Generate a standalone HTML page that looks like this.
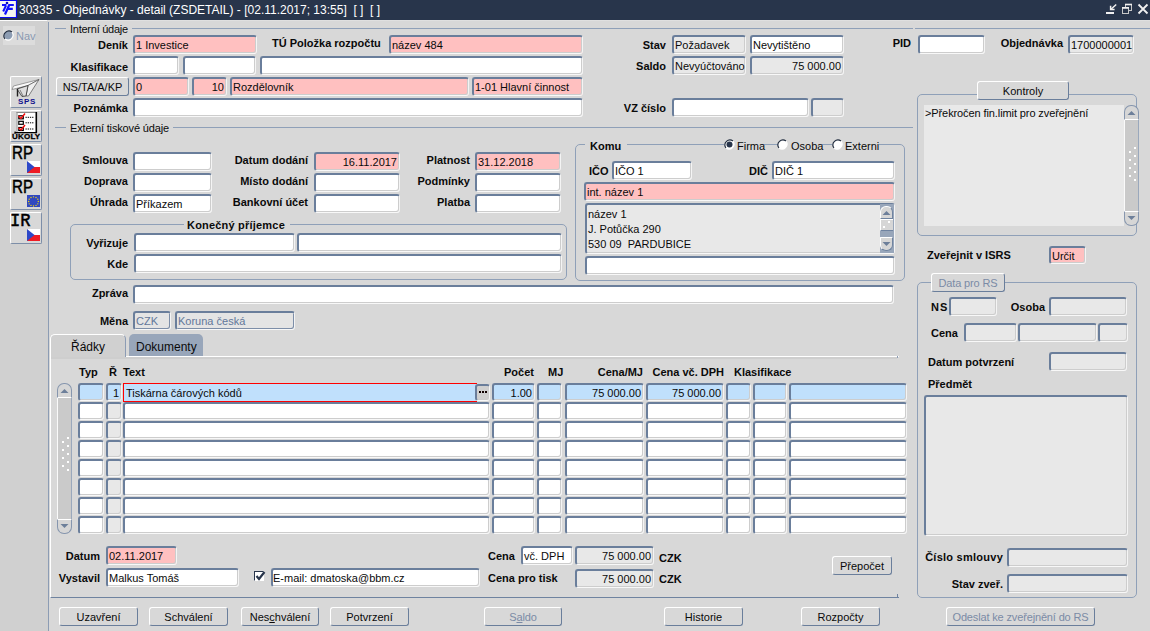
<!DOCTYPE html>
<html><head><meta charset="utf-8"><title>ZSDETAIL</title>
<style>
*{margin:0;padding:0}
html,body{width:1150px;height:631px;overflow:hidden;background:#d8d8d8;}
body{position:relative;font-family:"Liberation Sans",sans-serif;font-size:11px;color:#0a0a0a;}
.f{position:absolute;box-sizing:border-box;border-top:2px solid #6a7e9b;border-left:2px solid #6a7e9b;border-right:1px solid #f4f4f4;border-bottom:1px solid #f8f8f8;border-radius:3px;overflow:hidden;white-space:nowrap;line-height:14px;padding:1px 2px 0 1px;box-shadow:inset -1px -1px 0 #cdcdcd;}
.l{position:absolute;font-weight:bold;line-height:13px;white-space:nowrap;}
.b{position:absolute;box-sizing:border-box;background:#d8d8d8;border-top:1px solid #fff;border-left:1px solid #fff;border-right:1px solid #6a7e9b;border-bottom:1px solid #6a7e9b;border-radius:3px;text-align:center;white-space:nowrap;}
.b u{text-decoration:underline;}
</style></head>
<body>
<div style="position:absolute;left:0px;top:0px;width:1150px;height:20px;background:#28354b;"></div>
<div style="position:absolute;left:0px;top:20px;width:1150px;height:1px;background:#e0e0e0;"></div>
<div style="position:absolute;left:0px;top:20px;width:47px;height:1px;background:#fcfcfc;"></div>
<svg style="position:absolute;left:0;top:0" width="18" height="19" viewBox="0 0 18 19">
<rect x="0" y="0" width="16" height="17" fill="#f6f6f2"/>
<path d="M0 0.5 H16.5 V17.5 H0" stroke="#0808f0" stroke-width="1.2" fill="none"/>
<circle cx="7" cy="3" r="1.3" fill="#0808c0"/>
<path d="M2 5 H6.5 M6 5.5 L3.2 11.5" stroke="#1010ff" stroke-width="2" fill="none"/>
<path d="M9.3 4.8 L5 14.5 M8.5 5 H13.8 M7.3 8.8 H12.8" stroke="#1010ff" stroke-width="2.2" fill="none"/>
</svg>
<div style="position:absolute;left:19px;top:3px;font-size:12px;line-height:14px;color:#fff;white-space:nowrap;">30335 - Objednávky - detail (ZSDETAIL) - [02.11.2017; 13:55]&nbsp; [ ]&nbsp; [ ]</div>
<svg style="position:absolute;left:1100px;top:0" width="50" height="19" viewBox="0 0 50 19">
<g stroke="#f0f0f0" fill="none">
<path d="M16.2 4.5 L11 9.2" stroke-width="1.5"/>
<path d="M10.6 5.8 V9.6 H14.6" stroke-width="1.5"/>
<path d="M6 13 H14" stroke-width="2"/>
<rect x="25.5" y="4.5" width="6" height="6" stroke="#c8c8c8" stroke-width="1"/>
<path d="M25 4.5 H32" stroke-width="1.6"/>
<rect x="22.5" y="8" width="6" height="5.5" fill="#28354b" stroke="#c8c8c8" stroke-width="1"/>
<path d="M22 7.8 H29" stroke-width="1.6"/>
<path d="M38.5 4.5 L47.5 13.5 M47.5 4.5 L38.5 13.5" stroke-width="1.8"/>
</g></svg>
<div style="position:absolute;left:0px;top:21px;width:48px;height:610px;background:#d0d0d0;"></div>
<div style="position:absolute;left:48px;top:22px;width:1px;height:609px;background:#8c9cb4;"></div>
<div style="position:absolute;left:3px;top:26px;width:32px;height:19px;background:#dcdcdc;"></div>
<svg style="position:absolute;left:3px;top:30px" width="11" height="11"><circle cx="5.5" cy="5.5" r="4.3" fill="#8d9db3"/><path d="M2 9 A5 5 0 0 1 9 2" stroke="#1e2a3c" stroke-width="1.1" fill="none"/><path d="M9 2 A5 5 0 0 1 2 9" stroke="#fff" stroke-width="1.1" fill="none"/></svg>
<div class="l" style="top:30px;left:16px;font-weight:normal;color:#8a9ab2;">Nav</div>
<div style="position:absolute;left:10px;top:76px;width:32px;height:32px;box-sizing:border-box;border-top:1px solid #fff;border-left:1px solid #fff;border-right:1px solid #7d8ea8;border-bottom:1px solid #7d8ea8;border-radius:2px;background:#d8d8d8;overflow:hidden"><div style="position:absolute;left:-1px;top:-1px;width:32px;height:32px"><svg width="32" height="32" style="position:absolute;left:0;top:0">
<path d="M2 13.5 L3.5 10 L29 3.5 L18 9.5 Z" fill="#fafafa" stroke="#7a7a7a" stroke-width="0.7"/>
<path d="M18 9.5 L29 3.5 L18.5 20 L16 20 Z" fill="#f0f0f0" stroke="#505050" stroke-width="0.7"/>
<path d="M7 13 L18 9.5 L16 20 L12 20.5 Z" fill="#dedede" stroke="#303030" stroke-width="0.8"/>
<path d="M7.5 13 V20.5" stroke="#202020" stroke-width="1.4"/>
<path d="M10 14 L13 20" stroke="#606060" stroke-width="0.8"/>
</svg><div style="position:absolute;left:0;top:21px;width:32px;text-align:center;font:bold 8px/9px 'Liberation Sans',sans-serif;color:#10108c;letter-spacing:0.6px;padding-left:1px">SPS</div></div></div>
<div style="position:absolute;left:10px;top:110px;width:32px;height:32px;box-sizing:border-box;border-top:1px solid #fff;border-left:1px solid #fff;border-right:1px solid #7d8ea8;border-bottom:1px solid #7d8ea8;border-radius:2px;background:#d8d8d8;overflow:hidden"><div style="position:absolute;left:-1px;top:-1px;width:32px;height:32px"><svg width="32" height="32" style="position:absolute;left:0;top:0">
<rect x="6.5" y="2" width="20" height="20.5" fill="#fff"/>
<path d="M7 2 V22 M6.5 2.5 H26" stroke="#8a8a8a" stroke-width="1"/>
<path d="M26.3 2 V23" stroke="#000" stroke-width="1.6"/>
<path d="M5 22.6 H27 M5.1 21.5 V23" stroke="#000" stroke-width="1.2"/>
<rect x="8.8" y="5.8" width="4.5" height="3" fill="none" stroke="#000" stroke-width="1.2"/>
<rect x="8.8" y="11.3" width="4.5" height="3" fill="none" stroke="#000" stroke-width="1.2"/>
<rect x="8.8" y="17.5" width="4.5" height="3" fill="none" stroke="#000" stroke-width="1.2"/>
<path d="M15.5 7.3 H24 M15.5 12.8 H24 M15.5 19 H24" stroke="#000" stroke-width="1" stroke-dasharray="1.3 0.9"/>
<path d="M8.5 6 L11 8.5 L15 3.5 M8.5 17.7 L11 20 L15 15" stroke="#f01010" stroke-width="1.5" fill="none"/>
</svg><div style="position:absolute;left:2px;top:22px;width:28px;text-align:center;font:bold 8px/9px 'Liberation Sans',sans-serif;color:#000;letter-spacing:0.2px;-webkit-text-stroke:0.3px #000">ÚKOLY</div></div></div>
<div style="position:absolute;left:10px;top:144px;width:32px;height:32px;box-sizing:border-box;border-top:1px solid #fff;border-left:1px solid #fff;border-right:1px solid #7d8ea8;border-bottom:1px solid #7d8ea8;border-radius:2px;background:#d8d8d8;overflow:hidden"><div style="position:absolute;left:-1px;top:-1px;width:32px;height:32px"><div style="position:absolute;left:2px;top:0px;font:18px/18px 'Liberation Sans',sans-serif;color:#000;transform:scaleX(0.84);transform-origin:0 0;-webkit-text-stroke:0.5px #000;white-space:nowrap">RP</div><svg width="13" height="12" style="position:absolute;left:17px;top:17px"><rect width="13" height="6" fill="#fff"/><rect y="6" width="13" height="6" fill="#ee1c25"/><path d="M0 0 L7.5 6 L0 12 Z" fill="#2d48c8"/></svg></div></div>
<div style="position:absolute;left:10px;top:178px;width:32px;height:32px;box-sizing:border-box;border-top:1px solid #fff;border-left:1px solid #fff;border-right:1px solid #7d8ea8;border-bottom:1px solid #7d8ea8;border-radius:2px;background:#d8d8d8;overflow:hidden"><div style="position:absolute;left:-1px;top:-1px;width:32px;height:32px"><div style="position:absolute;left:2px;top:0px;font:18px/18px 'Liberation Sans',sans-serif;color:#000;transform:scaleX(0.84);transform-origin:0 0;-webkit-text-stroke:0.5px #000;white-space:nowrap">RP</div><svg width="13" height="12" style="position:absolute;left:17px;top:17px"><rect width="13" height="12" fill="#3048c0"/><g fill="#ffe000"><circle cx="6.5" cy="1.8" r=".65"/><circle cx="9" cy="2.5" r=".65"/><circle cx="10.8" cy="4.2" r=".65"/><circle cx="11.3" cy="6.5" r=".65"/><circle cx="10.8" cy="8.8" r=".65"/><circle cx="9" cy="10.4" r=".65"/><circle cx="6.5" cy="11" r=".65"/><circle cx="4" cy="10.4" r=".65"/><circle cx="2.2" cy="8.8" r=".65"/><circle cx="1.7" cy="6.5" r=".65"/><circle cx="2.2" cy="4.2" r=".65"/><circle cx="4" cy="2.5" r=".65"/></g></svg></div></div>
<div style="position:absolute;left:10px;top:212px;width:32px;height:32px;box-sizing:border-box;border-top:1px solid #fff;border-left:1px solid #fff;border-right:1px solid #7d8ea8;border-bottom:1px solid #7d8ea8;border-radius:2px;background:#d8d8d8;overflow:hidden"><div style="position:absolute;left:-1px;top:-1px;width:32px;height:32px"><div style="position:absolute;left:0px;top:0px;font:18px/18px 'Liberation Mono',monospace;color:#000;transform:scaleX(0.95);transform-origin:0 0;-webkit-text-stroke:0.5px #000;white-space:nowrap">IR</div><svg width="13" height="12" style="position:absolute;left:17px;top:17px"><rect width="13" height="6" fill="#fff"/><rect y="6" width="13" height="6" fill="#ee1c25"/><path d="M0 0 L7.5 6 L0 12 Z" fill="#2d48c8"/></svg></div></div>
<div style="position:absolute;left:55px;top:28px;width:11px;height:1px;background:#8fa0b8;"></div>
<div class="l" style="top:23px;left:70px;font-weight:normal;letter-spacing:-0.25px;">Interní údaje</div>
<div style="position:absolute;left:132px;top:28px;width:781px;height:1px;background:#8fa0b8;"></div>
<div style="position:absolute;left:915px;top:28px;width:235px;height:1px;background:#8fa0b8;"></div>
<div class="l" style="top:39px;right:1022px;">Deník</div>
<div class="f" style="left:133px;top:35px;width:124px;height:19px;background:#ffc0c0;"><span style="">1 Investice</span></div>
<div class="l" style="top:37px;left:272px;">TÚ Položka rozpočtu</div>
<div class="f" style="left:389px;top:35px;width:194px;height:19px;background:#ffc0c0;"><span style="">název 484</span></div>
<div class="l" style="top:39px;right:484px;">Stav</div>
<div class="f" style="left:672px;top:35px;width:74px;height:19px;background:#e8e8e8;"><span style="">Požadavek</span></div>
<div class="f" style="left:750px;top:35px;width:94px;height:19px;background:#fff;"><span style="">Nevytištěno</span></div>
<div class="l" style="top:37px;right:239px;">PID</div>
<div class="f" style="left:918px;top:35px;width:67px;height:19px;background:#fff;"><span style=""></span></div>
<div class="l" style="top:37px;right:87px;">Objednávka</div>
<div class="f" style="left:1068px;top:35px;width:66px;height:19px;background:#e8e8e8;"><span style="">1700000001</span></div>
<div class="l" style="top:61px;right:1022px;">Klasifikace</div>
<div class="f" style="left:133px;top:56px;width:46px;height:19px;background:#fff;"><span style=""></span></div>
<div class="f" style="left:183px;top:56px;width:73px;height:19px;background:#fff;"><span style=""></span></div>
<div class="f" style="left:260px;top:56px;width:323px;height:19px;background:#fff;"><span style=""></span></div>
<div class="l" style="top:60px;right:484px;">Saldo</div>
<div class="f" style="left:672px;top:56px;width:74px;height:19px;background:#e8e8e8;"><span style="">Nevyúčtováno</span></div>
<div class="f" style="left:750px;top:56px;width:94px;height:19px;background:#e8e8e8;text-align:right;"><span style="">75 000.00</span></div>
<div class="b" style="left:56px;top:77px;width:73px;height:19px;line-height:18px;">NS/TA/A/KP</div>
<div class="f" style="left:133px;top:77px;width:56px;height:19px;background:#ffc0c0;"><span style="">0</span></div>
<div class="f" style="left:192px;top:77px;width:35px;height:19px;background:#ffc0c0;text-align:right;"><span style="">10</span></div>
<div class="f" style="left:230px;top:77px;width:239px;height:19px;background:#ffc0c0;"><span style="">Rozdělovník</span></div>
<div class="f" style="left:472px;top:77px;width:111px;height:19px;background:#ffc0c0;"><span style="">1-01 Hlavní činnost</span></div>
<div class="l" style="top:102px;right:1022px;">Poznámka</div>
<div class="f" style="left:133px;top:98px;width:450px;height:19px;background:#fff;"><span style=""></span></div>
<div class="l" style="top:102px;right:484px;">VZ číslo</div>
<div class="f" style="left:672px;top:98px;width:137px;height:19px;background:#fff;"><span style=""></span></div>
<div class="f" style="left:811px;top:98px;width:33px;height:19px;background:#e8e8e8;"><span style=""></span></div>
<div style="position:absolute;left:917px;top:94px;width:220px;height:142px;box-sizing:border-box;border:1px solid #8fa0b8;border-radius:5px;"></div>
<div class="b" style="left:977px;top:81px;width:92px;height:19px;line-height:18px;">Kontroly</div>
<div style="position:absolute;left:924px;top:105px;width:200px;height:121px;background:#e9e9e9;"></div>
<div class="l" style="top:107px;left:925px;font-weight:normal;letter-spacing:-0.1px;">&gt;Překročen fin.limit pro zveřejnění</div>
<div style="position:absolute;left:1124px;top:117px;width:15px;height:97px;background:#cacaca;box-sizing:border-box;border-left:1px solid #fafafa;border-right:1px solid #9aa8bc;"></div>
<div style="position:absolute;left:1124px;top:105px;width:15px;height:15px;box-sizing:border-box;border:1px solid #8696ae;border-radius:7px 7px 1px 1px;background:#d6d6d6;border-bottom-color:#fff"></div>
<svg style="position:absolute;left:1124px;top:105px" width="15" height="15"><path d="M3.5 10 L7.5 6 L11.5 10 Z" fill="#6d7f9a"/></svg>
<div style="position:absolute;left:1124px;top:211px;width:15px;height:15px;box-sizing:border-box;border:1px solid #8696ae;border-radius:1px 1px 7px 7px;background:#d6d6d6;border-top-color:#fff"></div>
<svg style="position:absolute;left:1124px;top:211px" width="15" height="15"><path d="M3.5 5 L7.5 9 L11.5 5 Z" fill="#6d7f9a"/></svg>
<svg style="position:absolute;left:1124px;top:105px" width="15" height="121"><rect x="10" y="42" width="2" height="2" fill="#fff"/><rect x="10" y="50" width="2" height="2" fill="#fff"/><rect x="10" y="58" width="2" height="2" fill="#fff"/><rect x="10" y="66" width="2" height="2" fill="#fff"/><rect x="10" y="74" width="2" height="2" fill="#fff"/><rect x="5" y="46" width="2" height="2" fill="#fff"/><rect x="5" y="54" width="2" height="2" fill="#fff"/><rect x="5" y="62" width="2" height="2" fill="#fff"/><rect x="5" y="70" width="2" height="2" fill="#fff"/></svg>
<div class="l" style="top:249px;left:927px;">Zveřejnit v ISRS</div>
<div class="f" style="left:1049px;top:246px;width:37px;height:18px;background:#ffc0c0;"><span style="">Určit</span></div>
<div style="position:absolute;left:917px;top:282px;width:220px;height:316px;box-sizing:border-box;border:1px solid #8fa0b8;border-radius:5px;"></div>
<div class="b" style="left:931px;top:273px;width:74px;height:19px;line-height:18px;color:#7b8ba6;letter-spacing:-0.15px;">Data pro RS</div>
<div class="l" style="top:301px;left:931px;letter-spacing:1px;">NS</div>
<div class="f" style="left:949px;top:297px;width:48px;height:19px;background:#e8e8e8;"><span style=""></span></div>
<div class="l" style="top:301px;right:105px;">Osoba</div>
<div class="f" style="left:1049px;top:297px;width:78px;height:19px;background:#e8e8e8;"><span style=""></span></div>
<div class="l" style="top:327px;left:931px;">Cena</div>
<div class="f" style="left:964px;top:323px;width:53px;height:19px;background:#e8e8e8;"><span style=""></span></div>
<div class="f" style="left:1018px;top:323px;width:79px;height:19px;background:#e8e8e8;"><span style=""></span></div>
<div class="f" style="left:1098px;top:323px;width:30px;height:19px;background:#e8e8e8;"><span style=""></span></div>
<div class="l" style="top:356px;left:928px;">Datum potvrzení</div>
<div class="f" style="left:1049px;top:352px;width:78px;height:19px;background:#e8e8e8;"><span style=""></span></div>
<div class="l" style="top:378px;left:928px;">Předmět</div>
<div class="f" style="left:924px;top:395px;width:204px;height:141px;background:#e8e8e8;"><span style=""></span></div>
<div class="l" style="top:551px;right:147px;letter-spacing:0.25px;">Číslo smlouvy</div>
<div class="f" style="left:1007px;top:548px;width:121px;height:19px;background:#e8e8e8;"><span style=""></span></div>
<div class="l" style="top:578px;right:147px;">Stav zveř.</div>
<div class="f" style="left:1007px;top:574px;width:121px;height:19px;background:#e8e8e8;"><span style=""></span></div>
<div class="b" style="left:946px;top:607px;width:149px;height:19px;line-height:18px;color:#7b8ba6;letter-spacing:-0.15px;">Odeslat ke zveřejnění do RS</div>
<div style="position:absolute;left:55px;top:127px;width:11px;height:1px;background:#8fa0b8;"></div>
<div class="l" style="top:122px;left:70px;font-weight:normal;letter-spacing:-0.15px;">Externí tiskové údaje</div>
<div style="position:absolute;left:173px;top:127px;width:740px;height:1px;background:#8fa0b8;"></div>
<div class="l" style="top:154px;right:1022px;">Smlouva</div>
<div class="f" style="left:133px;top:152px;width:79px;height:19px;background:#fff;"><span style=""></span></div>
<div class="l" style="top:175px;right:1022px;">Doprava</div>
<div class="f" style="left:133px;top:173px;width:79px;height:19px;background:#fff;"><span style=""></span></div>
<div class="l" style="top:196px;right:1022px;">Úhrada</div>
<div class="f" style="left:133px;top:194px;width:79px;height:19px;background:#fff;"><span style="">Příkazem</span></div>
<div class="l" style="top:154px;right:842px;">Datum dodání</div>
<div class="f" style="left:314px;top:152px;width:86px;height:19px;background:#ffc0c0;text-align:right;"><span style="">16.11.2017</span></div>
<div class="l" style="top:175px;right:842px;">Místo dodání</div>
<div class="f" style="left:314px;top:173px;width:86px;height:19px;background:#fff;"><span style=""></span></div>
<div class="l" style="top:196px;right:842px;">Bankovní účet</div>
<div class="f" style="left:314px;top:194px;width:86px;height:19px;background:#fff;"><span style=""></span></div>
<div class="l" style="top:154px;right:680px;">Platnost</div>
<div class="f" style="left:475px;top:152px;width:86px;height:19px;background:#ffc0c0;"><span style="">31.12.2018</span></div>
<div class="l" style="top:175px;right:680px;">Podmínky</div>
<div class="f" style="left:475px;top:173px;width:86px;height:19px;background:#fff;"><span style=""></span></div>
<div class="l" style="top:196px;right:680px;">Platba</div>
<div class="f" style="left:475px;top:194px;width:86px;height:19px;background:#fff;"><span style=""></span></div>
<div style="position:absolute;left:70px;top:224px;width:497px;height:56px;box-sizing:border-box;border:1px solid #8fa0b8;border-radius:5px;"></div>
<div style="position:absolute;left:184px;top:220px;width:106px;height:8px;background:#d8d8d8;"></div>
<div class="l" style="top:219px;left:187px;letter-spacing:0.2px;">Konečný příjemce</div>
<div class="l" style="top:237px;right:1022px;">Vyřizuje</div>
<div class="f" style="left:134px;top:233px;width:161px;height:19px;background:#fff;"><span style=""></span></div>
<div class="f" style="left:297px;top:233px;width:265px;height:19px;background:#fff;"><span style=""></span></div>
<div class="l" style="top:258px;right:1022px;">Kde</div>
<div class="f" style="left:134px;top:254px;width:428px;height:19px;background:#fff;"><span style=""></span></div>
<div style="position:absolute;left:575px;top:144px;width:330px;height:137px;box-sizing:border-box;border:1px solid #8fa0b8;border-radius:5px;"></div>
<div style="position:absolute;left:585px;top:138px;width:42px;height:10px;background:#d8d8d8;"></div>
<div class="l" style="top:140px;left:590px;">Komu</div>
<div style="position:absolute;left:724px;top:138px;width:158px;height:10px;background:#d8d8d8;"></div>
<div style="position:absolute;left:762px;top:144px;width:16px;height:1px;background:#8fa0b8;"></div>
<div style="position:absolute;left:822px;top:144px;width:10px;height:1px;background:#8fa0b8;"></div>
<svg style="position:absolute;left:724px;top:139px" width="11" height="11"><circle cx="5.5" cy="5.5" r="4.5" fill="#fff"/><circle cx="5.5" cy="5.5" r="3" fill="#28354b"/><path d="M2 9 A5 5 0 0 1 9 2" stroke="#1e2a3c" stroke-width="1.1" fill="none"/><path d="M9 2 A5 5 0 0 1 2 9" stroke="#fff" stroke-width="1.1" fill="none"/></svg>
<div class="l" style="top:140px;left:737px;font-weight:normal;">Firma</div>
<svg style="position:absolute;left:777px;top:139px" width="11" height="11"><circle cx="5.5" cy="5.5" r="4.5" fill="#fff"/><path d="M2 9 A5 5 0 0 1 9 2" stroke="#1e2a3c" stroke-width="1.1" fill="none"/><path d="M9 2 A5 5 0 0 1 2 9" stroke="#fff" stroke-width="1.1" fill="none"/></svg>
<div class="l" style="top:140px;left:791px;font-weight:normal;">Osoba</div>
<svg style="position:absolute;left:832px;top:139px" width="11" height="11"><circle cx="5.5" cy="5.5" r="4.5" fill="#fff"/><path d="M2 9 A5 5 0 0 1 9 2" stroke="#1e2a3c" stroke-width="1.1" fill="none"/><path d="M9 2 A5 5 0 0 1 2 9" stroke="#fff" stroke-width="1.1" fill="none"/></svg>
<div class="l" style="top:140px;left:845px;font-weight:normal;">Externi</div>
<div style="position:absolute;left:879px;top:144px;width:21px;height:1px;background:#8fa0b8;"></div>
<div class="l" style="top:165px;left:589px;">IČO</div>
<div class="f" style="left:612px;top:161px;width:80px;height:19px;background:#fff;"><span style="">IČO 1</span></div>
<div class="l" style="top:165px;right:382px;">DIČ</div>
<div class="f" style="left:772px;top:161px;width:123px;height:19px;background:#fff;"><span style="">DIČ 1</span></div>
<div class="f" style="left:584px;top:182px;width:311px;height:19px;background:#ffc0c0;"><span style="">int. název 1</span></div>
<div class="f" style="left:585px;top:203px;width:310px;height:51px;background:#e8e8e8;line-height:15px;padding-top:2px">název 1<br>J. Potůčka 290<br>530 09&nbsp; PARDUBICE</div>
<div style="position:absolute;left:880px;top:204px;width:14px;height:49px;background:#98a6ba;"></div>
<div style="position:absolute;left:880px;top:206px;width:13px;height:13px;box-sizing:border-box;border-top:1px solid #fff;border-left:1px solid #fff;border-bottom:1px solid #6f83a0;border-right:1px solid #6f83a0;border-radius:6px 6px 1px 1px;background:#d6d6d6;"></div>
<svg style="position:absolute;left:880px;top:206px" width="14" height="13"><path d="M2.5 9 L6.5 5 L10.5 9 Z" fill="#6d7f9a"/></svg>
<div style="position:absolute;left:880px;top:219px;width:13px;height:12px;box-sizing:border-box;border-top:1px solid #fff;border-left:1px solid #fff;border-bottom:1px solid #6f83a0;background:#d6d6d6;"></div>
<svg style="position:absolute;left:880px;top:219px" width="14" height="12"><rect x="3" y="7" width="2" height="2" fill="#fff"/><rect x="8" y="2" width="2" height="2" fill="#fff"/></svg>
<div style="position:absolute;left:880px;top:237px;width:13px;height:14px;box-sizing:border-box;border-top:1px solid #fff;border-left:1px solid #fff;border-bottom:1px solid #6f83a0;border-right:1px solid #6f83a0;border-radius:1px 1px 6px 6px;background:#d6d6d6;"></div>
<svg style="position:absolute;left:880px;top:237px" width="14" height="14"><path d="M2.5 5 L6.5 9 L10.5 5 Z" fill="#6d7f9a"/></svg>
<div class="f" style="left:585px;top:256px;width:310px;height:19px;background:#fff;"><span style=""></span></div>
<div class="l" style="top:287px;right:1022px;">Zpráva</div>
<div class="f" style="left:133px;top:285px;width:761px;height:19px;background:#fff;"><span style=""></span></div>
<div class="l" style="top:315px;right:1022px;">Měna</div>
<div class="f" style="left:133px;top:311px;width:38px;height:19px;background:#e4e4e4;color:#62779a;box-shadow:inset -1px -1px 0 #7d8ea8;"><span style="">CZK</span></div>
<div class="f" style="left:175px;top:311px;width:120px;height:19px;background:#e4e4e4;color:#62779a;box-shadow:inset -1px -1px 0 #7d8ea8;"><span style="">Koruna česká</span></div>
<div style="position:absolute;left:50px;top:356px;width:849px;height:242px;box-sizing:border-box;border-left:1px solid #fff;border-top:1px solid #fff;border-bottom:1px solid #6f83a0;"></div>
<div style="position:absolute;left:50px;top:334px;width:76px;height:24px;box-sizing:border-box;background:#d0d0d0;border-top:1px solid #fff;border-left:1px solid #fff;border-right:1px solid #8c9cb4;border-radius:5px 5px 0 0;"></div>
<div class="l" style="top:341px;left:71px;font-weight:normal;font-size:12px;">Řádky</div>
<div style="position:absolute;left:129px;top:334px;width:74px;height:22px;background:#98a6ba;border-radius:5px 5px 0 0;"></div>
<div class="l" style="top:341px;left:136px;font-weight:normal;font-size:12px;">Dokumenty</div>
<div style="position:absolute;left:51px;top:357px;width:846px;height:2px;background:#cecece;"></div>
<div style="position:absolute;left:897px;top:356px;width:1px;height:2px;background:#8c9cb4;"></div>
<div style="position:absolute;left:897px;top:594px;width:1px;height:3px;background:#6f83a0;"></div>
<div class="l" style="top:366px;left:79px;">Typ</div>
<div class="l" style="top:366px;left:109px;">Ř</div>
<div class="l" style="top:366px;left:123px;">Text</div>
<div class="l" style="top:366px;right:616px;">Počet</div>
<div class="l" style="top:366px;left:548px;">MJ</div>
<div class="l" style="top:366px;right:507px;">Cena/MJ</div>
<div class="l" style="top:366px;right:426px;">Cena vč. DPH</div>
<div class="l" style="top:366px;left:734px;">Klasifikace</div>
<div class="f" style="left:78px;top:383px;width:26px;height:18px;background:#c0e0fc;"><span style=""></span></div>
<div class="f" style="left:106px;top:383px;width:16px;height:18px;background:#c0e0fc;text-align:right;"><span style="">1</span></div>
<div class="f" style="left:123px;top:383px;width:354px;height:19px;background:#c0e0fc;border:1px solid #ff0000;border-right:none;border-radius:0;padding-top:2px;padding-left:2px;box-shadow:none">Tiskárna čárových kódů</div>
<div class="f" style="left:475px;top:384px;width:15px;height:17px;background:#d0d0d0;padding:0"></div>
<svg style="position:absolute;left:475px;top:384px" width="15" height="17"><rect x="4" y="7" width="2" height="2" fill="#100000"/><rect x="7" y="7" width="2" height="2" fill="#100000"/><rect x="10" y="7" width="2" height="2" fill="#100000"/></svg>
<div class="f" style="left:492px;top:383px;width:43px;height:18px;background:#c0e0fc;text-align:right;"><span style="">1.00</span></div>
<div class="f" style="left:537px;top:383px;width:25px;height:18px;background:#c0e0fc;"><span style=""></span></div>
<div class="f" style="left:565px;top:383px;width:79px;height:18px;background:#c0e0fc;text-align:right;"><span style="">75 000.00</span></div>
<div class="f" style="left:646px;top:383px;width:78px;height:18px;background:#c0e0fc;text-align:right;"><span style="">75 000.00</span></div>
<div class="f" style="left:726px;top:383px;width:25px;height:18px;background:#c0e0fc;"><span style=""></span></div>
<div class="f" style="left:753px;top:383px;width:34px;height:18px;background:#c0e0fc;"><span style=""></span></div>
<div class="f" style="left:789px;top:383px;width:118px;height:18px;background:#c0e0fc;"><span style=""></span></div>
<div class="f" style="left:78px;top:402px;width:26px;height:18px;background:#fff;"><span style=""></span></div>
<div class="f" style="left:106px;top:402px;width:16px;height:18px;background:#e8e8e8;"><span style=""></span></div>
<div class="f" style="left:123px;top:402px;width:367px;height:18px;background:#fff;"><span style=""></span></div>
<div class="f" style="left:492px;top:402px;width:43px;height:18px;background:#fff;"><span style=""></span></div>
<div class="f" style="left:537px;top:402px;width:25px;height:18px;background:#fff;"><span style=""></span></div>
<div class="f" style="left:565px;top:402px;width:79px;height:18px;background:#fff;"><span style=""></span></div>
<div class="f" style="left:646px;top:402px;width:78px;height:18px;background:#fff;"><span style=""></span></div>
<div class="f" style="left:726px;top:402px;width:25px;height:18px;background:#fff;"><span style=""></span></div>
<div class="f" style="left:753px;top:402px;width:34px;height:18px;background:#fff;"><span style=""></span></div>
<div class="f" style="left:789px;top:402px;width:118px;height:18px;background:#fff;"><span style=""></span></div>
<div class="f" style="left:78px;top:421px;width:26px;height:18px;background:#fff;"><span style=""></span></div>
<div class="f" style="left:106px;top:421px;width:16px;height:18px;background:#e8e8e8;"><span style=""></span></div>
<div class="f" style="left:123px;top:421px;width:367px;height:18px;background:#fff;"><span style=""></span></div>
<div class="f" style="left:492px;top:421px;width:43px;height:18px;background:#fff;"><span style=""></span></div>
<div class="f" style="left:537px;top:421px;width:25px;height:18px;background:#fff;"><span style=""></span></div>
<div class="f" style="left:565px;top:421px;width:79px;height:18px;background:#fff;"><span style=""></span></div>
<div class="f" style="left:646px;top:421px;width:78px;height:18px;background:#fff;"><span style=""></span></div>
<div class="f" style="left:726px;top:421px;width:25px;height:18px;background:#fff;"><span style=""></span></div>
<div class="f" style="left:753px;top:421px;width:34px;height:18px;background:#fff;"><span style=""></span></div>
<div class="f" style="left:789px;top:421px;width:118px;height:18px;background:#fff;"><span style=""></span></div>
<div class="f" style="left:78px;top:440px;width:26px;height:18px;background:#fff;"><span style=""></span></div>
<div class="f" style="left:106px;top:440px;width:16px;height:18px;background:#e8e8e8;"><span style=""></span></div>
<div class="f" style="left:123px;top:440px;width:367px;height:18px;background:#fff;"><span style=""></span></div>
<div class="f" style="left:492px;top:440px;width:43px;height:18px;background:#fff;"><span style=""></span></div>
<div class="f" style="left:537px;top:440px;width:25px;height:18px;background:#fff;"><span style=""></span></div>
<div class="f" style="left:565px;top:440px;width:79px;height:18px;background:#fff;"><span style=""></span></div>
<div class="f" style="left:646px;top:440px;width:78px;height:18px;background:#fff;"><span style=""></span></div>
<div class="f" style="left:726px;top:440px;width:25px;height:18px;background:#fff;"><span style=""></span></div>
<div class="f" style="left:753px;top:440px;width:34px;height:18px;background:#fff;"><span style=""></span></div>
<div class="f" style="left:789px;top:440px;width:118px;height:18px;background:#fff;"><span style=""></span></div>
<div class="f" style="left:78px;top:459px;width:26px;height:18px;background:#fff;"><span style=""></span></div>
<div class="f" style="left:106px;top:459px;width:16px;height:18px;background:#e8e8e8;"><span style=""></span></div>
<div class="f" style="left:123px;top:459px;width:367px;height:18px;background:#fff;"><span style=""></span></div>
<div class="f" style="left:492px;top:459px;width:43px;height:18px;background:#fff;"><span style=""></span></div>
<div class="f" style="left:537px;top:459px;width:25px;height:18px;background:#fff;"><span style=""></span></div>
<div class="f" style="left:565px;top:459px;width:79px;height:18px;background:#fff;"><span style=""></span></div>
<div class="f" style="left:646px;top:459px;width:78px;height:18px;background:#fff;"><span style=""></span></div>
<div class="f" style="left:726px;top:459px;width:25px;height:18px;background:#fff;"><span style=""></span></div>
<div class="f" style="left:753px;top:459px;width:34px;height:18px;background:#fff;"><span style=""></span></div>
<div class="f" style="left:789px;top:459px;width:118px;height:18px;background:#fff;"><span style=""></span></div>
<div class="f" style="left:78px;top:478px;width:26px;height:18px;background:#fff;"><span style=""></span></div>
<div class="f" style="left:106px;top:478px;width:16px;height:18px;background:#e8e8e8;"><span style=""></span></div>
<div class="f" style="left:123px;top:478px;width:367px;height:18px;background:#fff;"><span style=""></span></div>
<div class="f" style="left:492px;top:478px;width:43px;height:18px;background:#fff;"><span style=""></span></div>
<div class="f" style="left:537px;top:478px;width:25px;height:18px;background:#fff;"><span style=""></span></div>
<div class="f" style="left:565px;top:478px;width:79px;height:18px;background:#fff;"><span style=""></span></div>
<div class="f" style="left:646px;top:478px;width:78px;height:18px;background:#fff;"><span style=""></span></div>
<div class="f" style="left:726px;top:478px;width:25px;height:18px;background:#fff;"><span style=""></span></div>
<div class="f" style="left:753px;top:478px;width:34px;height:18px;background:#fff;"><span style=""></span></div>
<div class="f" style="left:789px;top:478px;width:118px;height:18px;background:#fff;"><span style=""></span></div>
<div class="f" style="left:78px;top:497px;width:26px;height:18px;background:#fff;"><span style=""></span></div>
<div class="f" style="left:106px;top:497px;width:16px;height:18px;background:#e8e8e8;"><span style=""></span></div>
<div class="f" style="left:123px;top:497px;width:367px;height:18px;background:#fff;"><span style=""></span></div>
<div class="f" style="left:492px;top:497px;width:43px;height:18px;background:#fff;"><span style=""></span></div>
<div class="f" style="left:537px;top:497px;width:25px;height:18px;background:#fff;"><span style=""></span></div>
<div class="f" style="left:565px;top:497px;width:79px;height:18px;background:#fff;"><span style=""></span></div>
<div class="f" style="left:646px;top:497px;width:78px;height:18px;background:#fff;"><span style=""></span></div>
<div class="f" style="left:726px;top:497px;width:25px;height:18px;background:#fff;"><span style=""></span></div>
<div class="f" style="left:753px;top:497px;width:34px;height:18px;background:#fff;"><span style=""></span></div>
<div class="f" style="left:789px;top:497px;width:118px;height:18px;background:#fff;"><span style=""></span></div>
<div class="f" style="left:78px;top:516px;width:26px;height:18px;background:#fff;"><span style=""></span></div>
<div class="f" style="left:106px;top:516px;width:16px;height:18px;background:#e8e8e8;"><span style=""></span></div>
<div class="f" style="left:123px;top:516px;width:367px;height:18px;background:#fff;"><span style=""></span></div>
<div class="f" style="left:492px;top:516px;width:43px;height:18px;background:#fff;"><span style=""></span></div>
<div class="f" style="left:537px;top:516px;width:25px;height:18px;background:#fff;"><span style=""></span></div>
<div class="f" style="left:565px;top:516px;width:79px;height:18px;background:#fff;"><span style=""></span></div>
<div class="f" style="left:646px;top:516px;width:78px;height:18px;background:#fff;"><span style=""></span></div>
<div class="f" style="left:726px;top:516px;width:25px;height:18px;background:#fff;"><span style=""></span></div>
<div class="f" style="left:753px;top:516px;width:34px;height:18px;background:#fff;"><span style=""></span></div>
<div class="f" style="left:789px;top:516px;width:118px;height:18px;background:#fff;"><span style=""></span></div>
<div style="position:absolute;left:57px;top:395px;width:15px;height:127px;background:#cacaca;box-sizing:border-box;border-left:1px solid #fafafa;border-right:1px solid #9aa8bc;"></div>
<div style="position:absolute;left:57px;top:383px;width:15px;height:15px;box-sizing:border-box;border:1px solid #8696ae;border-radius:7px 7px 1px 1px;background:#d6d6d6;border-bottom-color:#fff"></div>
<svg style="position:absolute;left:57px;top:383px" width="15" height="15"><path d="M3.5 10 L7.5 6 L11.5 10 Z" fill="#6d7f9a"/></svg>
<div style="position:absolute;left:57px;top:519px;width:15px;height:15px;box-sizing:border-box;border:1px solid #8696ae;border-radius:1px 1px 7px 7px;background:#d6d6d6;border-top-color:#fff"></div>
<svg style="position:absolute;left:57px;top:519px" width="15" height="15"><path d="M3.5 5 L7.5 9 L11.5 5 Z" fill="#6d7f9a"/></svg>
<svg style="position:absolute;left:57px;top:383px" width="15" height="151"><rect x="10" y="54" width="2" height="2" fill="#fff"/><rect x="10" y="62" width="2" height="2" fill="#fff"/><rect x="10" y="70" width="2" height="2" fill="#fff"/><rect x="10" y="78" width="2" height="2" fill="#fff"/><rect x="10" y="86" width="2" height="2" fill="#fff"/><rect x="5" y="58" width="2" height="2" fill="#fff"/><rect x="5" y="66" width="2" height="2" fill="#fff"/><rect x="5" y="74" width="2" height="2" fill="#fff"/><rect x="5" y="82" width="2" height="2" fill="#fff"/></svg>
<div class="l" style="top:550px;right:1050px;">Datum</div>
<div class="f" style="left:106px;top:546px;width:71px;height:19px;background:#ffc0c0;"><span style="">02.11.2017</span></div>
<div class="l" style="top:572px;right:1050px;">Vystavil</div>
<div class="f" style="left:106px;top:568px;width:133px;height:19px;background:#fff;"><span style="">Malkus Tomáš</span></div>
<div style="position:absolute;left:254px;top:571px;width:10px;height:10px;box-sizing:border-box;border:1px solid #28354b;border-right-color:#fff;border-bottom-color:#fff;background:#fff"></div>
<svg style="position:absolute;left:254px;top:569px" width="12" height="13"><path d="M2.5 7 L5 10 L10.5 3" stroke="#28354b" stroke-width="2.2" fill="none"/></svg>
<div class="f" style="left:271px;top:568px;width:209px;height:19px;background:#fff;padding-left:0;"><span style="">E-mail: dmatoska@bbm.cz</span></div>
<div class="l" style="top:550px;left:488px;">Cena</div>
<div class="f" style="left:521px;top:546px;width:52px;height:19px;background:#fff;"><span style="">vč. DPH</span></div>
<div class="f" style="left:575px;top:546px;width:79px;height:19px;background:#e8e8e8;text-align:right;"><span style="">75 000.00</span></div>
<div class="l" style="top:552px;left:659px;">CZK</div>
<div class="l" style="top:572px;left:488px;">Cena pro tisk</div>
<div class="f" style="left:575px;top:569px;width:79px;height:19px;background:#e8e8e8;text-align:right;"><span style="">75 000.00</span></div>
<div class="l" style="top:573px;left:659px;">CZK</div>
<div class="b" style="left:832px;top:556px;width:60px;height:19px;line-height:18px;">Přepočet</div>
<div class="b" style="left:59px;top:607px;width:79px;height:19px;line-height:18px;">Uzavření</div>
<div class="b" style="left:149px;top:607px;width:79px;height:19px;line-height:18px;">Schválení</div>
<div class="b" style="left:241px;top:607px;width:78px;height:19px;line-height:18px;">Nes<u>c</u>hválení</div>
<div class="b" style="left:330px;top:607px;width:79px;height:19px;line-height:18px;">Potvrzení</div>
<div class="b" style="left:484px;top:607px;width:78px;height:19px;line-height:18px;color:#7b8ba6;letter-spacing:-0.15px;">S<u>a</u>ldo</div>
<div class="b" style="left:664px;top:607px;width:79px;height:19px;line-height:18px;">Historie</div>
<div class="b" style="left:801px;top:607px;width:79px;height:19px;line-height:18px;">Rozpočty</div>
</body></html>
